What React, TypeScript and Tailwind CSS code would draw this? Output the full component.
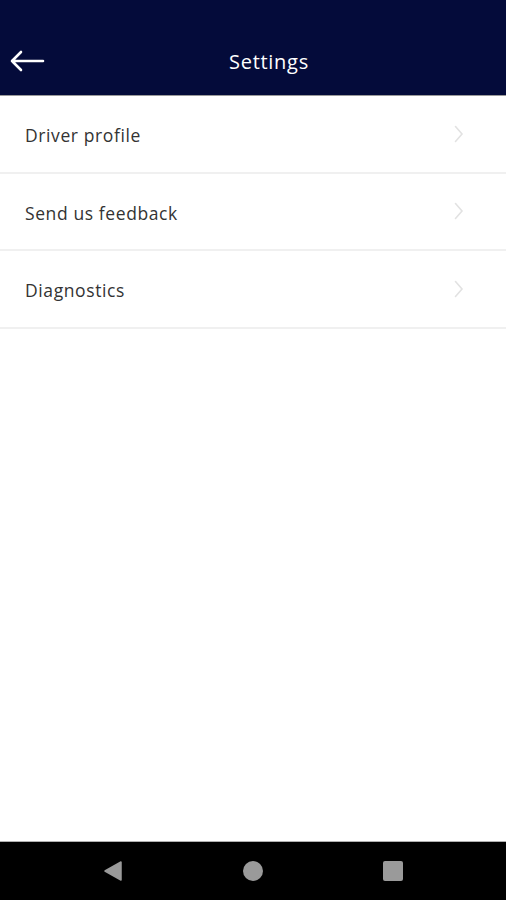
import React from "react";

const items = ["Driver profile", "Send us feedback", "Diagnostics"];

export default function App() {
  return (
    <div className="w-[506px] h-[900px] flex flex-col bg-white" style={{ fontFamily: "'Open Sans', Lato, sans-serif" }}>
      <div className="h-[95px] bg-[#040b3a] relative flex items-end shrink-0">
        <div className="h-[66px] w-full flex items-center justify-center relative pl-[32px]">
          <svg className="absolute left-[9px] top-[21px]" width="36" height="22" viewBox="0 0 36 22">
            <path d="M34 11H3M12 2L3 11l9 9" fill="none" stroke="#fff" strokeWidth="2.6" strokeLinecap="round" strokeLinejoin="round" />
          </svg>
          <span className="text-white text-[20px] tracking-[0.7px]">Settings</span>
        </div>
      </div>
      <div className="h-px bg-[#9a9a9a]" />
      <div className="flex-1 flex flex-col">
        {items.map((t) => (
          <div key={t} className="h-[77.5px] flex items-center justify-between pl-[25px] pr-[42px] border-b-2 border-[#f0f0f0]">
            <span className="text-[17.5px] text-[#333] tracking-[0.6px] mt-[3px]">{t}</span>
            <svg width="10" height="18" viewBox="0 0 10 18">
              <path d="M1.5 1.5L8 9l-6.5 7.5" fill="none" stroke="#e2e2e2" strokeWidth="1.6" strokeLinecap="round" />
            </svg>
          </div>
        ))}
      </div>
      <div className="h-px bg-[#b0b0b0]" />
      <div className="h-[58px] bg-black flex items-center justify-center gap-[120px] shrink-0">
        <svg width="20" height="22" viewBox="0 0 20 22">
          <path d="M2 11L18 2v18z" fill="#9a9a9a" stroke="#9a9a9a" strokeWidth="1.5" strokeLinejoin="round" />
        </svg>
        <div className="w-[20px] h-[20px] rounded-full bg-[#9a9a9a]" />
        <div className="w-[20px] h-[20px] rounded-[2px] bg-[#9a9a9a]" />
      </div>
    </div>
  );
}
